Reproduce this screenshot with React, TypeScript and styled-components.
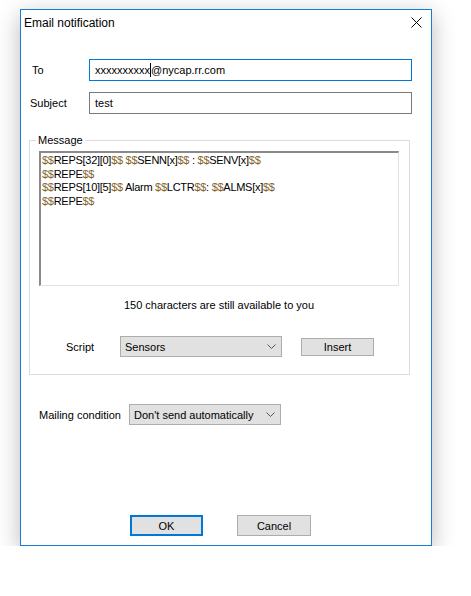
import React from "react";
import styled, { createGlobalStyle } from "styled-components";

const Global = createGlobalStyle`
  html, body { margin: 0; padding: 0; background: #ffffff; }
  * { box-sizing: border-box; }
`;

const Page = styled.div`
  padding: 9px 0 0 20px;
`;

const Window = styled.div`
  width: 412px;
  height: 537px;
  border: 1px solid #1a7bd3;
  background: #ffffff;
  box-shadow: 0 6px 22px rgba(0, 0, 0, 0.28);
  display: flex;
  flex-direction: column;
  font-family: "Liberation Sans", Arial, sans-serif;
  font-size: 11px;
  color: #000000;
`;

const TitleBar = styled.div`
  height: 30px;
  display: flex;
  align-items: flex-start;
  justify-content: space-between;
  padding: 5px 9px 0 3px;
`;

const Title = styled.div`
  font-size: 12px;
  line-height: 16px;
`;

const CloseIcon = styled.svg`
  margin-top: 2px;
  display: block;
`;

const Body = styled.div`
  flex: 1;
  display: flex;
  flex-direction: column;
  padding-top: 19px;
`;

const FieldRow = styled.div<{ $gap?: number }>`
  display: flex;
  align-items: center;
  padding-left: 9px;
  margin-top: ${(p) => p.$gap ?? 0}px;
`;

const Label = styled.div<{ $width: number; $indent?: number }>`
  width: ${(p) => p.$width}px;
  padding-left: ${(p) => p.$indent ?? 0}px;
  line-height: 16px;
  flex-shrink: 0;
`;

const TextField = styled.div<{ $focused?: boolean }>`
  width: 323px;
  height: 22px;
  border: 1px solid ${(p) => (p.$focused ? "#0078d7" : "#7a7a7a")};
  padding: 0 5px;
  display: flex;
  align-items: center;
  white-space: pre;
  font-size: 11px;
`;

const Caret = styled.span`
  display: inline-block;
  width: 1px;
  height: 14px;
  background: #000000;
`;

const GroupBox = styled.fieldset`
  margin: 18px 21px 0 8px;
  border: 1px solid #dcdcdc;
  padding: 3px 10px 17px 9px;
  min-width: 0;
`;

const Legend = styled.legend`
  margin-left: -3px;
  padding: 0 2px;
  font-size: 11px;
  line-height: 16px;
`;

const MessageBox = styled.div`
  height: 135px;
  border-style: solid;
  border-width: 2px 1px 1px 2px;
  border-color: #8a8a8a #e3e3e3 #e3e3e3 #8a8a8a;
  padding: 1px 1px 0;
  font-size: 11px;
  letter-spacing: -0.28px;
  line-height: 13.67px;
  white-space: pre;
  overflow: hidden;
`;

const Dollar = styled.span`
  color: #85642a;
`;

const Caption = styled.div`
  margin-top: 11px;
  text-align: center;
  line-height: 16px;
`;

const ScriptRow = styled.div`
  margin-top: 23px;
  display: flex;
  align-items: center;
  padding-left: 27px;
`;

const Select = styled.div<{ $width: number }>`
  width: ${(p) => p.$width}px;
  height: 21px;
  background: #e1e1e1;
  border: 1px solid #adadad;
  display: flex;
  align-items: center;
  justify-content: space-between;
  padding: 0 5px 0 4px;
  flex-shrink: 0;
`;

const Chevron = styled.svg`
  display: block;
`;

const Button = styled.div<{ $width: number; $height: number; $default?: boolean }>`
  width: ${(p) => p.$width}px;
  height: ${(p) => p.$height}px;
  background: #e1e1e1;
  border: ${(p) => (p.$default ? "2px solid #0078d7" : "1px solid #adadad")};
  display: flex;
  align-items: center;
  justify-content: center;
  flex-shrink: 0;
`;

const InsertButton = styled(Button)`
  margin-left: 19px;
`;

const MailingRow = styled.div`
  margin-top: 29px;
  display: flex;
  align-items: center;
  padding-left: 18px;
`;

const ButtonRow = styled.div`
  margin-top: auto;
  display: flex;
  gap: 34px;
  padding: 0 0 9px 109px;
`;

const Down = () => (
  <Chevron width="9" height="5" viewBox="0 0 9 5">
    <polyline points="0.5,0.5 4.5,4.5 8.5,0.5" fill="none" stroke="#555" strokeWidth="1" />
  </Chevron>
);

// Renders macro text with the "$" markers tinted.
const Macro = ({ text }: { text: string }) => (
  <>
    {text.split(/(\$+)/).map((part, i) =>
      part.startsWith("$") ? <Dollar key={i}>{part}</Dollar> : <React.Fragment key={i}>{part}</React.Fragment>
    )}
  </>
);

const lines = [
  "$$REPS[32][0]$$ $$SENN[x]$$ : $$SENV[x]$$",
  "$$REPE$$",
  "$$REPS[10][5]$$ Alarm $$LCTR$$: $$ALMS[x]$$",
  "$$REPE$$",
];

export default function App() {
  return (
    <>
      <Global />
      <Page>
        <Window>
          <TitleBar>
            <Title>Email notification</Title>
            <CloseIcon width="11" height="11" viewBox="0 0 11 11">
              <path d="M0.5 0.5 L10.5 10.5 M10.5 0.5 L0.5 10.5" stroke="#000" strokeWidth="1" />
            </CloseIcon>
          </TitleBar>
          <Body>
            <FieldRow>
              <Label $width={59} $indent={2}>To</Label>
              <TextField $focused>
                xxxxxxxxxx<Caret />@nycap.rr.com
              </TextField>
            </FieldRow>
            <FieldRow $gap={11}>
              <Label $width={59}>Subject</Label>
              <TextField>test</TextField>
            </FieldRow>

            <GroupBox>
              <Legend>Message</Legend>
              <MessageBox>
                {lines.map((l, i) => (
                  <div key={i}>
                    <Macro text={l} />
                  </div>
                ))}
              </MessageBox>
              <Caption>150 characters are still available to you</Caption>
              <ScriptRow>
                <Label $width={54}>Script</Label>
                <Select $width={162}>
                  <span>Sensors</span>
                  <Down />
                </Select>
                <InsertButton $width={73} $height={18}>Insert</InsertButton>
              </ScriptRow>
            </GroupBox>

            <MailingRow>
              <Label $width={90}>Mailing condition</Label>
              <Select $width={152}>
                <span>Don't send automatically</span>
                <Down />
              </Select>
            </MailingRow>

            <ButtonRow>
              <Button $width={73} $height={21} $default>OK</Button>
              <Button $width={74} $height={21}>Cancel</Button>
            </ButtonRow>
          </Body>
        </Window>
      </Page>
    </>
  );
}
